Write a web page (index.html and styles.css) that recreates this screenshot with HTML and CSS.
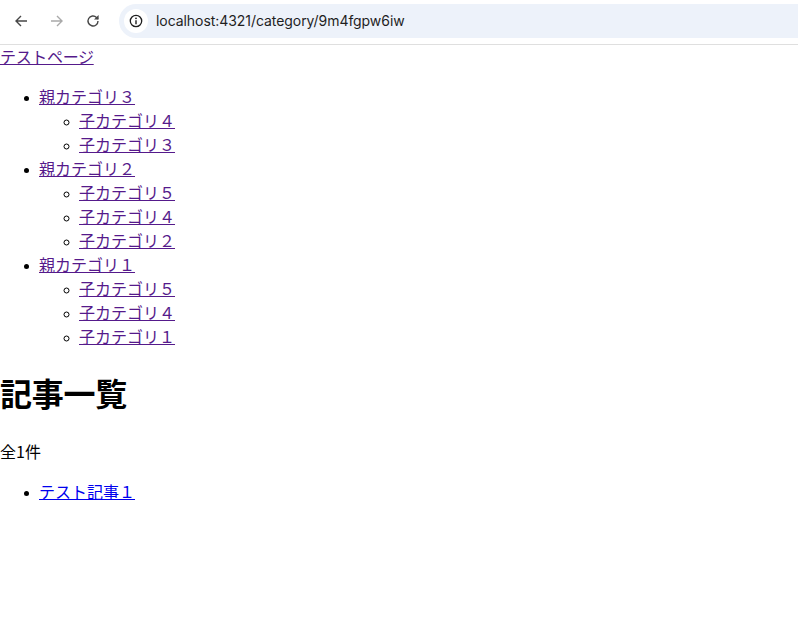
FILE: index.html
```html
<!DOCTYPE html>
<html lang="ja">
<head>
<meta charset="utf-8">
<title>記事一覧</title>
<link rel="stylesheet" href="styles.css">
</head>
<body>
<div class="toolbar">
  <div class="nav">
    <svg class="icon" viewBox="0 0 16 16"><path d="M14 8H3M8 3L3 8l5 5" fill="none" stroke="#474747" stroke-width="1.4"/></svg>
    <svg class="icon" viewBox="0 0 16 16"><path d="M2 8h11M8 3l5 5-5 5" fill="none" stroke="#a9a9a9" stroke-width="1.4"/></svg>
    <svg class="icon" viewBox="0 0 16 16"><path d="M13 8a5 5 0 1 1-1.5-3.6L13 6" fill="none" stroke="#474747" stroke-width="1.4"/><path d="M13.6 2v4.6H9z" fill="#474747"/></svg>
  </div>
  <div class="omnibox">
    <span class="info">
      <svg viewBox="0 0 14 14" width="14" height="14"><circle cx="7" cy="7" r="5.7" fill="none" stroke="#1f1f1f" stroke-width="1.3"/><path d="M7 6.2v4" stroke="#1f1f1f" stroke-width="1.4"/><circle cx="7" cy="4.3" r=".9" fill="#1f1f1f"/></svg>
    </span>
    <span class="url">localhost:4321/category/9m4fgpw6iw</span>
  </div>
</div>
<main class="page">
  <a class="visited site-link" href="#">テストページ</a>
  <ul class="list">
    <li><a class="visited" href="#">親カテゴリ３</a>
      <ul class="sublist">
        <li><a class="visited" href="#">子カテゴリ４</a></li>
        <li><a class="visited" href="#">子カテゴリ３</a></li>
      </ul>
    </li>
    <li><a class="visited" href="#">親カテゴリ２</a>
      <ul class="sublist">
        <li><a class="visited" href="#">子カテゴリ５</a></li>
        <li><a class="visited" href="#">子カテゴリ４</a></li>
        <li><a class="visited" href="#">子カテゴリ２</a></li>
      </ul>
    </li>
    <li><a class="visited" href="#">親カテゴリ１</a>
      <ul class="sublist">
        <li><a class="visited" href="#">子カテゴリ５</a></li>
        <li><a class="visited" href="#">子カテゴリ４</a></li>
        <li><a class="visited" href="#">子カテゴリ１</a></li>
      </ul>
    </li>
  </ul>
  <h1 class="title">記事一覧</h1>
  <p class="count">全1件</p>
  <ul class="list">
    <li><a class="fresh" href="#">テスト記事１</a></li>
  </ul>
</main>
</body>
</html>
```
FILE: styles.css
```css
html, body {
  margin: 0;
  padding: 0;
  background: #fff;
}
body {
  font-family: "Noto Sans CJK JP", "Liberation Sans", sans-serif;
  font-size: 16px;
  line-height: 24px;
  color: #000;
}
.toolbar {
  display: flex;
  align-items: center;
  height: 42px;
  padding-bottom: 2px;
  border-bottom: 1px solid #dfdfdf;
  box-sizing: content-box;
}
.nav {
  display: flex;
  align-items: center;
  gap: 20px;
  padding-left: 13px;
  width: 107px;
  box-sizing: border-box;
  flex: none;
}
.icon {
  width: 16px;
  height: 16px;
  flex: none;
}
.omnibox {
  flex: 1;
  height: 34px;
  margin-left: 12px;
  display: flex;
  align-items: center;
  background: #edf2fa;
  border-radius: 17px 0 0 17px;
  padding-left: 5px;
}
.info {
  width: 24px;
  height: 24px;
  border-radius: 50%;
  background: #fff;
  display: flex;
  align-items: center;
  justify-content: center;
  flex: none;
}
.url {
  font-family: Inter, "Liberation Sans", sans-serif;
  font-size: 14px;
  line-height: 20px;
  letter-spacing: -0.06px;
  color: #1f1f1f;
  margin-left: 8px;
}
.page {
  margin-top: -1px;
}
.visited { color: #551a8b; }
.fresh { color: #0000ee; }
.site-link {
  letter-spacing: -0.33px;
}
.list {
  margin: 16px 0;
  padding-left: 40px;
}
.list a {
  margin-left: -1px;
}
.list li::marker {
  font-size: 12px;
}
.sublist {
  margin: 0;
  padding-left: 40px;
  list-style: circle;
}
.title {
  font-size: 32px;
  line-height: 48px;
  font-weight: 700;
  margin: 20px 0 23px;
  letter-spacing: -0.25px;
}
.count {
  margin: 16px 0;
}
```
